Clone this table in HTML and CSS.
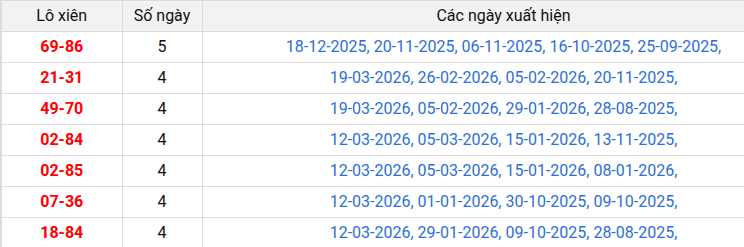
FILE: index.html
```html
<!DOCTYPE html>
<html lang="vi">
<head>
<meta charset="utf-8">
<title>Lô xiên</title>
<link rel="stylesheet" href="styles.css">
</head>
<body>
<div class="table-wrap">
<table class="stats">
  <colgroup>
    <col class="c-pair">
    <col class="c-count">
    <col class="c-dates">
  </colgroup>
  <thead>
    <tr><th>Lô xiên</th><th>Số ngày</th><th>Các ngày xuất hiện</th></tr>
  </thead>
  <tbody>
    <tr><td class="pair">69-86</td><td class="count">5</td><td class="dates">18-12-2025, 20-11-2025, 06-11-2025, 16-10-2025, 25-09-2025,</td></tr>
    <tr><td class="pair">21-31</td><td class="count">4</td><td class="dates">19-03-2026, 26-02-2026, 05-02-2026, 20-11-2025,</td></tr>
    <tr><td class="pair">49-70</td><td class="count">4</td><td class="dates">19-03-2026, 05-02-2026, 29-01-2026, 28-08-2025,</td></tr>
    <tr><td class="pair">02-84</td><td class="count">4</td><td class="dates">12-03-2026, 05-03-2026, 15-01-2026, 13-11-2025,</td></tr>
    <tr><td class="pair">02-85</td><td class="count">4</td><td class="dates">12-03-2026, 05-03-2026, 15-01-2026, 08-01-2026,</td></tr>
    <tr><td class="pair">07-36</td><td class="count">4</td><td class="dates">12-03-2026, 01-01-2026, 30-10-2025, 09-10-2025,</td></tr>
    <tr><td class="pair">18-84</td><td class="count">4</td><td class="dates">12-03-2026, 29-01-2026, 09-10-2025, 28-08-2025,</td></tr>
  </tbody>
</table>
</div>
</body>
</html>
```

FILE: styles.css
```css
html, body {
  margin: 0;
  padding: 0;
  background: #fff;
}
body {
  font-family: Roboto, "Liberation Sans", Arial, sans-serif;
  font-size: 16px;
  color: #000;
}
.table-wrap {
  width: 100%;
  overflow: hidden;
}
.stats {
  border-collapse: collapse;
  table-layout: fixed;
  width: 804px;
  border-left: 2px solid #dcdcdc;
}
.c-pair { width: 121px; }
.c-count { width: 80px; }
.c-dates { width: 603px; }
.stats th,
.stats td {
  border: 1px solid #dcdcdc;
  height: 30px;
  padding: 0;
  text-align: center;
  vertical-align: middle;
  white-space: nowrap;
  line-height: 18px;
}
.stats th {
  background: #f2f2f2;
  font-weight: normal;
  color: #111;
}
.stats .pair {
  color: #ff0000;
  font-weight: bold;
}
.stats .count {
  color: #111;
}
.stats .dates {
  color: #2d6fd9;
}
```
